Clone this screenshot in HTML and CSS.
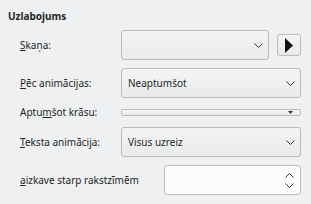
FILE: index.html
```html
<!DOCTYPE html>
<html lang="lv">
<head>
    <meta charset="UTF-8">
    <title>Uzlabojums</title>
    <link rel="stylesheet" href="styles.css">
</head>
<body>

<div class="panel">
    <h3 class="title">Uzlabojums</h3>

    <div class="form">
        <label class="lbl"><u>S</u>kaņa:</label>
        <div class="ctrl row-sound">
            <div class="combo combo-sound">
                <span></span>
                <svg class="chev" width="9" height="5" viewBox="0 0 9 5"><path d="M0.5 0.5 L4.5 4.5 L8.5 0.5" fill="none" stroke="#31363b" stroke-width="1"/></svg>
            </div>
            <button class="play">
                <svg width="8" height="15" viewBox="0 0 8 15"><path d="M0 0 L8 7.5 L0 15 Z" fill="#111"/></svg>
            </button>
        </div>

        <label class="lbl"><u>P</u>ēc animācijas:</label>
        <div class="ctrl">
            <div class="combo">
                <span>Neaptumšot</span>
                <svg class="chev" width="9" height="5" viewBox="0 0 9 5"><path d="M0.5 0.5 L4.5 4.5 L8.5 0.5" fill="none" stroke="#31363b" stroke-width="1"/></svg>
            </div>
        </div>

        <label class="lbl">Aptu<u>m</u>šot krāsu:</label>
        <div class="ctrl">
            <div class="colorbar">
                <svg width="5" height="3" viewBox="0 0 5 3"><path d="M0 0 L5 0 L2.5 3 Z" fill="#31363b"/></svg>
            </div>
        </div>

        <label class="lbl"><u>T</u>eksta animācija:</label>
        <div class="ctrl">
            <div class="combo">
                <span>Visus uzreiz</span>
                <svg class="chev" width="9" height="5" viewBox="0 0 9 5"><path d="M0.5 0.5 L4.5 4.5 L8.5 0.5" fill="none" stroke="#31363b" stroke-width="1"/></svg>
            </div>
        </div>
    </div>

    <div class="delay-row">
        <label class="lbl"><u>a</u>izkave starp rakstzīmēm</label>
        <div class="spin">
            <span></span>
            <div class="arrows">
                <svg width="9" height="5" viewBox="0 0 9 5"><path d="M0.5 4.5 L4.5 0.5 L8.5 4.5" fill="none" stroke="#31363b" stroke-width="1"/></svg>
                <svg width="9" height="5" viewBox="0 0 9 5"><path d="M0.5 0.5 L4.5 4.5 L8.5 0.5" fill="none" stroke="#31363b" stroke-width="1"/></svg>
            </div>
        </div>
    </div>
</div>

</body>
</html>
```

FILE: styles.css
```css
body {
    margin: 0;
    background: #eff0f1;
    font-family: 'Noto Sans', 'DejaVu Sans', sans-serif;
    font-size: 10px;
    color: #232627;
}
.panel {
    width: 311px;
    height: 204px;
    box-sizing: border-box;
    padding: 10px 10px 0 8px;
}
.title {
    margin: 0 0 7px 0;
    font-size: 10px;
    font-weight: bold;
    line-height: 13px;
    color: #232627;
}
.form {
    display: grid;
    grid-template-columns: 101px 180px;
    grid-template-rows: 30px 30px 13px 30px;
    row-gap: 8px;
    align-items: center;
    padding-left: 12px;
}
.lbl {
    line-height: 13px;
    white-space: nowrap;
}
.ctrl {
    display: flex;
    align-items: center;
    height: 100%;
}
.combo {
    flex: 1;
    height: 30px;
    box-sizing: border-box;
    display: flex;
    align-items: center;
    justify-content: space-between;
    padding: 0 5px 0 6px;
    border: 1px solid #b9bbbc;
    border-radius: 3px;
    background: linear-gradient(#f3f4f4, #e9eaeb);
}
.row-sound {
    gap: 8px;
}
.play {
    width: 24px;
    height: 22px;
    padding: 0;
    display: flex;
    align-items: center;
    justify-content: center;
    border: 1px solid #b9bbbc;
    border-radius: 3px;
    background: linear-gradient(#f3f4f4, #e9eaeb);
}
.colorbar {
    flex: 1;
    height: 7px;
    box-sizing: border-box;
    display: flex;
    align-items: center;
    justify-content: flex-end;
    padding-right: 7px;
    border: 1px solid #b9bbbc;
    border-radius: 2px;
    background: linear-gradient(#f3f4f4, #e9eaeb);
}
.delay-row {
    display: flex;
    align-items: center;
    justify-content: space-between;
    margin-top: 8px;
    padding-left: 12px;
    height: 30px;
}
.spin {
    width: 137px;
    height: 30px;
    box-sizing: border-box;
    display: flex;
    align-items: center;
    justify-content: flex-end;
    padding-right: 6px;
    border: 1px solid #b9bbbc;
    border-radius: 3px;
    background: #fcfcfc;
}
.arrows {
    display: flex;
    flex-direction: column;
    gap: 5px;
}
.arrows svg {
    display: block;
}
```
